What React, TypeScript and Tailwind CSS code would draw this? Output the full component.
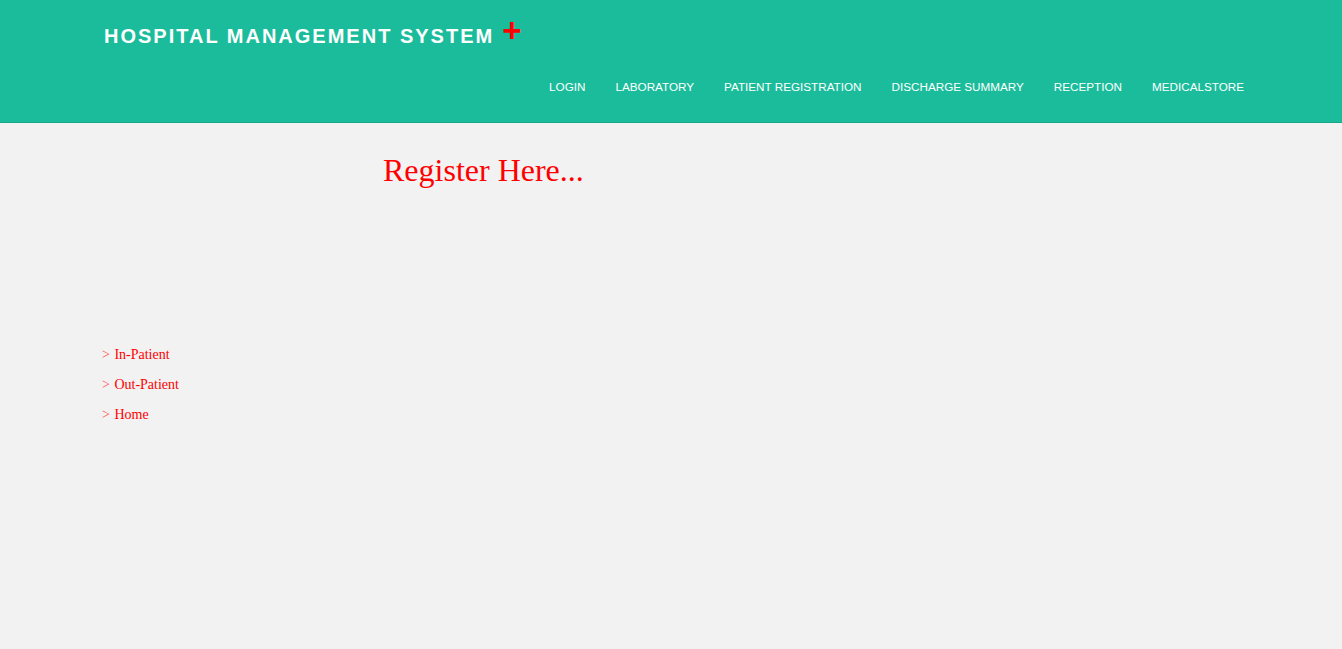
import React from 'react'

const navItems = [
    'LOGIN',
    'LABORATORY',
    'PATIENT REGISTRATION',
    'DISCHARGE SUMMARY',
    'RECEPTION',
    'MEDICALSTORE',
]

const sideLinks = ['In-Patient', 'Out-Patient', 'Home']

const App = () => {
    return (
        <div className="min-h-[649px] bg-[#f2f2f2]">
            <header className="h-[123px] bg-[#1bbc9b] border-b border-[#17a88a] pt-[26px] pl-[104px] pr-[83px]">
                <div className="flex items-start">
                    <h1 className="text-[20px] leading-[20px] font-bold tracking-[2px] text-white font-['Liberation_Sans',Arial,sans-serif]">
                        HOSPITAL MANAGEMENT SYSTEM
                    </h1>
                    <span className="relative -top-[10px] ml-[8px] text-[33px] leading-[30px] font-bold text-[#ff0000] font-['Liberation_Sans',Arial,sans-serif]">
                        +
                    </span>
                </div>
                <nav className="mt-[25px] flex justify-end">
                    {navItems.map((item) => (
                        <a
                            key={item}
                            href="#"
                            className="px-[15px] text-[11.7px] leading-[12px] text-white font-['Liberation_Sans',Arial,sans-serif]"
                        >
                            {item}
                        </a>
                    ))}
                </nav>
            </header>

            <main className="font-['Liberation_Serif','Times_New_Roman',serif]">
                <h2 className="mt-[32px] pl-[383px] text-[32px] leading-[31px] text-[#ff0000]">
                    Register Here...
                </h2>
                <ul className="mt-[154px] pl-[102px]">
                    {sideLinks.map((link) => (
                        <li key={link} className="text-[14px] leading-[30px] text-[#ff0000]">
                            <span className="text-[#ff4d4d]">&gt;</span>{' '}
                            <span className="ml-px">{link}</span>
                        </li>
                    ))}
                </ul>
            </main>
        </div>
    )
}

export default App
